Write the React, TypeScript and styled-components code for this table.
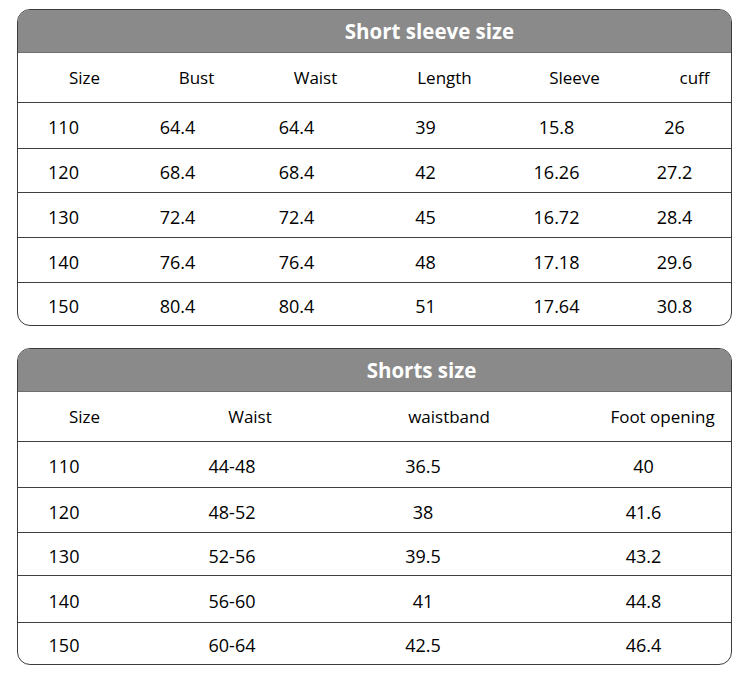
import React from "react";
import styled, { createGlobalStyle } from "styled-components";

const GlobalStyle = createGlobalStyle`
  html, body {
    margin: 0;
    padding: 0;
    background: #ffffff;
  }
  body {
    font-family: "Open Sans", "Noto Sans", "Liberation Sans", sans-serif;
    color: #000000;
  }
`;

const Page = styled.div`
  width: 750px;
  height: 685px;
  box-sizing: border-box;
  padding: 9px 0 0 17px;
  display: flex;
  flex-direction: column;
  gap: 22px;
`;

const Card = styled.div`
  width: 715px;
  box-sizing: border-box;
  border: 1.5px solid #3c3c3c;
  border-radius: 13px;
  overflow: hidden;
  background: #ffffff;
`;

const TitleBar = styled.div<{ $shift: number }>`
  height: 42px;
  background: #8a8a8a;
  color: #ffffff;
  font-weight: 700;
  font-size: 20.5px;
  display: flex;
  align-items: center;
  justify-content: center;
  padding-left: ${(p) => p.$shift}px;
  border-bottom: 1px solid #6f6f6f;
`;

const Row = styled.div<{ $cols: number[]; $height: number; $last?: boolean }>`
  display: grid;
  grid-template-columns: ${(p) => p.$cols.map((c) => `${c}px`).join(" ")};
  height: ${(p) => p.$height}px;
  align-items: center;
  border-bottom: ${(p) => (p.$last ? "none" : "1.5px solid #404040")};
  box-sizing: border-box;
`;

const HeadCell = styled.div`
  text-align: center;
  font-size: 17px;
  white-space: nowrap;
`;

const Cell = styled.div`
  text-align: center;
  font-size: 18px;
  padding-top: 3px;
  white-space: nowrap;
`;

interface SizeTableProps {
  title: string;
  titleShift: number;
  headers: string[];
  headCols: number[];
  dataCols: number[];
  rows: string[][];
  rowHeights: number[];
}

const SizeTable: React.FC<SizeTableProps> = ({
  title,
  titleShift,
  headers,
  headCols,
  dataCols,
  rows,
  rowHeights,
}) => (
  <Card>
    <TitleBar $shift={titleShift}>{title}</TitleBar>
    <Row $cols={headCols} $height={50}>
      {headers.map((h) => (
        <HeadCell key={h}>{h}</HeadCell>
      ))}
    </Row>
    {rows.map((r, i) => (
      <Row
        key={r[0]}
        $cols={dataCols}
        $height={rowHeights[i]}
        $last={i === rows.length - 1}
      >
        {r.map((v, j) => (
          <Cell key={j}>{v}</Cell>
        ))}
      </Row>
    ))}
  </Card>
);

const sleeveRows = [
  ["110", "64.4", "64.4", "39", "15.8", "26"],
  ["120", "68.4", "68.4", "42", "16.26", "27.2"],
  ["130", "72.4", "72.4", "45", "16.72", "28.4"],
  ["140", "76.4", "76.4", "48", "17.18", "29.6"],
  ["150", "80.4", "80.4", "51", "17.64", "30.8"],
];

const shortsRows = [
  ["110", "44-48", "36.5", "40"],
  ["120", "48-52", "38", "41.6"],
  ["130", "52-56", "39.5", "43.2"],
  ["140", "56-60", "41", "44.8"],
  ["150", "60-64", "42.5", "46.4"],
];

export default function App() {
  return (
    <>
      <GlobalStyle />
      <Page>
        <SizeTable
          title="Short sleeve size"
          titleShift={110}
          headers={["Size", "Bust", "Waist", "Length", "Sleeve", "cuff"]}
          headCols={[133, 91, 147, 111, 149, 91]}
          dataCols={[91, 137, 101, 157, 105, 131]}
          rows={sleeveRows}
          rowHeights={[46, 44, 45, 45, 42]}
        />
        <SizeTable
          title="Shorts size"
          titleShift={94}
          headers={["Size", "Waist", "waistband", "Foot opening"]}
          headCols={[133, 198, 200, 227]}
          dataCols={[92, 244, 138, 303]}
          rows={shortsRows}
          rowHeights={[46, 45, 43, 47, 41]}
        />
      </Page>
    </>
  );
}
